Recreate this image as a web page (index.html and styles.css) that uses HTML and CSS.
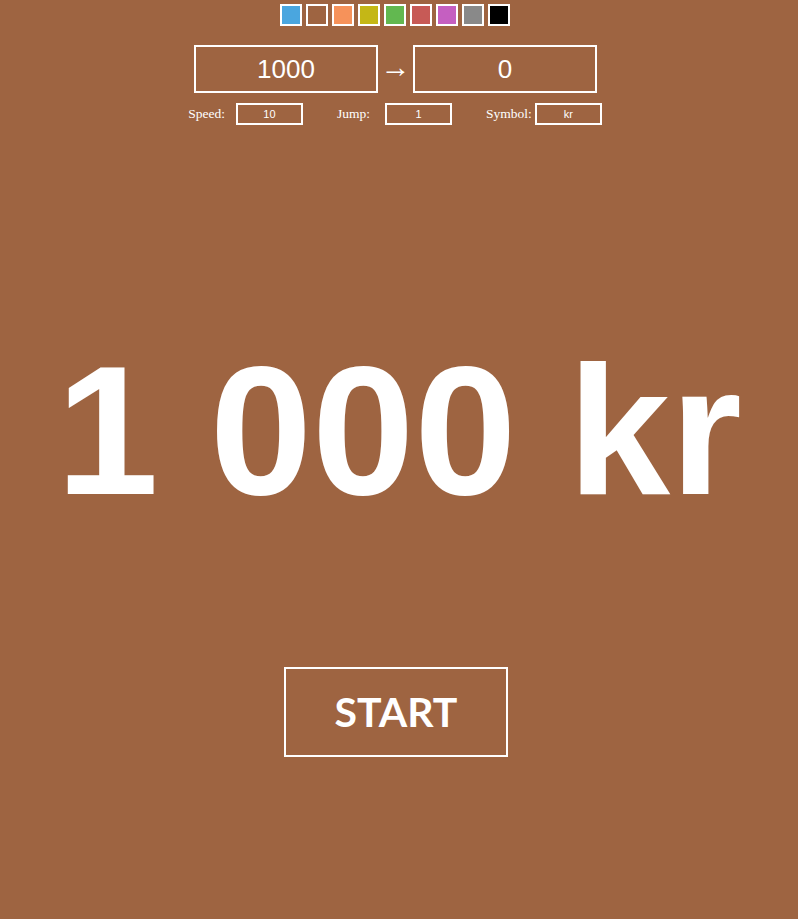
FILE: index.html
```html
<!DOCTYPE html>
<html>
<head>
<meta charset="utf-8">
<link rel="stylesheet" href="styles.css">
</head>
<body>
<div class="page">
  <div class="swatches">
    <span class="sw" style="background:#4aa6df"></span>
    <span class="sw" style="background:#9e6441"></span>
    <span class="sw" style="background:#f6925a"></span>
    <span class="sw" style="background:#c4b716"></span>
    <span class="sw" style="background:#62b850"></span>
    <span class="sw" style="background:#c75a56"></span>
    <span class="sw" style="background:#c55fc1"></span>
    <span class="sw" style="background:#898989"></span>
    <span class="sw" style="background:#000000"></span>
  </div>
  <div class="range">
    <div class="box">1000</div>
    <span class="arrow">→</span>
    <div class="box">0</div>
  </div>
  <div class="settings">
    <label class="lbl">Speed:</label><div class="small">10</div>
    <label class="lbl lbl-jump">Jump:</label><div class="small">1</div>
    <label class="lbl lbl-sym">Symbol:</label><div class="small">kr</div>
  </div>
  <div class="counter">1 000 kr</div>
  <div class="start">START</div>
</div>
</body>
</html>
```
FILE: styles.css
```css
html, body {
  margin: 0;
  padding: 0;
  background: #9e6441;
  height: 100%;
}
.page {
  display: flex;
  flex-direction: column;
  align-items: center;
  color: #fff;
}
.swatches {
  display: flex;
  gap: 4px;
  margin-top: 4px;
  margin-right: 8px;
}
.sw {
  width: 18px;
  height: 18px;
  border: 2px solid #fff;
  display: block;
}
.range {
  display: flex;
  align-items: center;
  margin-top: 19px;
  margin-right: 7px;
}
.box {
  width: 180px;
  height: 44px;
  border: 2px solid #fff;
  font-family: "Liberation Sans", Arial, sans-serif;
  font-size: 26px;
  line-height: 44px;
  text-align: center;
}
.arrow {
  font-family: "Liberation Serif", serif;
  font-size: 30px;
  width: 35px;
  text-align: center;
  line-height: 30px;
  margin-top: -5px;
}
.settings {
  display: flex;
  align-items: center;
  margin-top: 10px;
  margin-right: 8px;
  font-family: "Liberation Serif", serif;
  font-size: 13.5px;
}
.lbl {
  margin-right: 11px;
}
.lbl-jump {
  margin-left: 34px;
  margin-right: 15px;
}
.lbl-sym {
  margin-left: 34px;
  margin-right: 3px;
}
.small {
  width: 63px;
  height: 18px;
  border: 2px solid #fff;
  font-family: "Liberation Sans", Arial, sans-serif;
  font-size: 11px;
  line-height: 18px;
  text-align: center;
}
.counter {
  font-family: "Liberation Sans", Arial, sans-serif;
  font-weight: bold;
  font-size: 184px;
  line-height: 1;
  margin-top: 213px;
  white-space: nowrap;
}
.start {
  margin-top: 145px;
  margin-right: 6px;
  width: 220px;
  height: 86px;
  border: 2px solid #fff;
  font-family: Lato, sans-serif;
  font-weight: bold;
  font-size: 41px;
  line-height: 86px;
  text-align: center;
}
```
